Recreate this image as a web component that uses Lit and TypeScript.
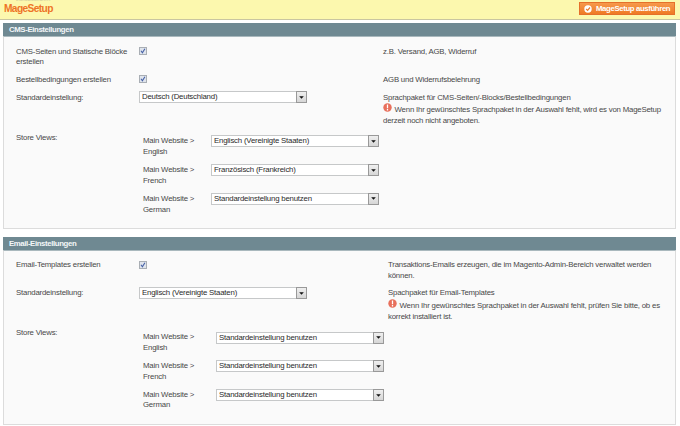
import { LitElement, html, css, svg } from "lit";
import { customElement, property } from "lit/decorators.js";

@customElement("select-box")
class SelectBox extends LitElement {
  @property() value = "";
  static styles = css`
    :host { display: flex; box-sizing: border-box; width: 168px; height: 12px; border: 1px solid #c6c8c9; background: #fff; color: #2a2a2a; }
    .value { flex: 1; padding-left: 2px; line-height: 10.4px; white-space: nowrap; }
    .arrow { box-sizing: border-box; width: 11px; margin: -1px; border: 1px solid #999; background: linear-gradient(#efefef, #d6d6d6); display: flex; align-items: center; justify-content: center; }
    svg { display: block; width: 5px; height: 3px; }
  `;
  render() {
    return html`<span class="value">${this.value}</span><span class="arrow"><svg viewBox="0 0 5 3"><path d="M0.2 0.2H4.8L2.5 2.8Z" fill="#111" /></svg></span>`;
  }
}

@customElement("check-box")
class CheckBox extends LitElement {
  static styles = css`
    :host { display: block; box-sizing: border-box; width: 8px; height: 8px; border: 1px solid #a9aeb4; background: #dfe4ec; }
    svg { display: block; width: 6px; height: 6px; }
  `;
  render() {
    return html`<svg viewBox="0 0 6 6"><path d="M1 2.8L2.4 4.8L4.9 0.8" fill="none" stroke="#4560a6" stroke-width="1.1" /></svg>`;
  }
}

const alertIcon = svg`<svg class="alert" viewBox="0 0 10 10"><circle cx="5" cy="5" r="4.7" fill="#e8705c" /><path d="M5 1.8V5.8M5 6.8V8.2" stroke="#fff" stroke-width="1.4" /></svg>`;

const stores = (values: string[]) => html`<div class="stores">
  ${["English", "French", "German"].map(
    (name, i) => html`<div class="store"><span class="store-name">Main Website &gt;<br />${name}</span><select-box .value=${values[i]}></select-box></div>`
  )}
</div>`;

@customElement("app-root")
class AppRoot extends LitElement {
  static styles = css`
    * { box-sizing: border-box; }
    :host { display: block; width: 680px; height: 426px; overflow: hidden; background: #fff; color: #484848; font: 7.8px/10.8px "Liberation Sans", Arial, sans-serif; letter-spacing: -0.19px; }
    .bar { position: relative; display: flex; justify-content: space-between; height: 20px; padding: 2px 5px 0 4px; overflow: hidden; background: #fcf8ae; border-bottom: 1px solid #c9c6a0; }
    .reset { position: absolute; left: 16px; top: -6px; color: #cfcb98; font-size: 6px; line-height: 10px; letter-spacing: -0.1px; }
    .title { font-size: 10.2px; line-height: 14px; font-weight: bold; letter-spacing: -0.62px; color: #ee7426; }
    .run { display: flex; align-items: center; width: 96px; height: 13px; padding-left: 4px; border: 1px solid #e5702a; background: linear-gradient(#f6994c, #ef7a24); color: #fff; font-weight: bold; letter-spacing: -0.38px; line-height: 11px; white-space: nowrap; }
    .run svg { width: 8px; height: 8px; margin-right: 4px; }
    .panel { width: 673px; margin: 3px 0 0 3px; }
    .head { height: 13px; padding-left: 6px; background: #6f8992; color: #f4f7f8; font-weight: bold; letter-spacing: -0.38px; line-height: 13px; }
    .body { display: grid; height: 193px; padding: 9.6px 0 0 12px; border: 1px solid #dcdcdc; border-top-color: #a9b8bd; background: #fafafa; grid-template-columns: 123px 244px 1fr; grid-template-rows: 28px 18px 40px 1fr; }
    .second { margin-top: 8px; }
    .second .body { height: 175px; padding-top: 9.4px; grid-template-columns: 123px 249px 1fr; grid-template-rows: 28px 40px 1fr; }
    check-box { margin-top: 0.6px; }
    .pick { margin-top: -1.5px; }
    .second .pick { margin-top: -1px; }
    .alert { display: inline-block; width: 9px; height: 9px; margin-right: 2.6px; vertical-align: -0.5px; }
    .note { white-space: nowrap; }
    .hint { display: block; line-height: 11px; margin-top: -0.2px; }
    .stores { grid-column: 2 / 4; padding: 3.7px 0 0 4px; }
    .store { display: flex; height: 28.8px; }
    .store-name { width: 68px; }
    .store select-box { margin-top: -0.9px; }
    .second .store select-box { margin-top: -0.4px; }
    .second .store-name { width: 73px; }
  `;
  render() {
    return html`
      <header class="bar">
        <span class="reset">zurücksetzen</span>
        <span class="title">MageSetup</span>
        <span class="run"><svg viewBox="0 0 8 8"><circle cx="4" cy="4" r="3.7" fill="#fff" /><path d="M2.2 4L3.6 5.4L6 2.5" fill="none" stroke="#ee7c2c" stroke-width="1.2" /></svg><span>MageSetup ausführen</span></span>
      </header>
      <section class="panel">
        <div class="head">CMS-Einstellungen</div>
        <div class="body">
          <span>CMS-Seiten und Statische Blöcke<br />erstellen</span><check-box></check-box><span class="note">z.B. Versand, AGB, Widerruf</span>
          <span>Bestellbedingungen erstellen</span><check-box></check-box><span class="note">AGB und Widerrufsbelehrung</span>
          <span>Standardeinstellung:</span><select-box class="pick" .value=${"Deutsch (Deutschland)"}></select-box>
          <span class="note">Sprachpaket für CMS-Seiten/-Blocks/Bestellbedingungen<span class="hint">${alertIcon}Wenn Ihr gewünschtes Sprachpaket in der Auswahl fehlt, wird es von MageSetup<br />derzeit noch nicht angeboten.</span></span>
          <span>Store Views:</span>${stores(["Englisch (Vereinigte Staaten)", "Französisch (Frankreich)", "Standardeinstellung benutzen"])}
        </div>
      </section>
      <section class="panel second">
        <div class="head">Email-Einstellungen</div>
        <div class="body">
          <span>Email-Templates erstellen</span><check-box></check-box><span class="note">Transaktions-Emails erzeugen, die im Magento-Admin-Bereich verwaltet werden<br />können.</span>
          <span>Standardeinstellung:</span><select-box class="pick" .value=${"Englisch (Vereinigte Staaten)"}></select-box>
          <span class="note">Spachpaket für Email-Templates<span class="hint">${alertIcon}Wenn Ihr gewünschtes Sprachpaket in der Auswahl fehlt, prüfen Sie bitte, ob es<br />korrekt installiert ist.</span></span>
          <span>Store Views:</span>${stores(["Standardeinstellung benutzen", "Standardeinstellung benutzen", "Standardeinstellung benutzen"])}
        </div>
      </section>
    `;
  }
}
